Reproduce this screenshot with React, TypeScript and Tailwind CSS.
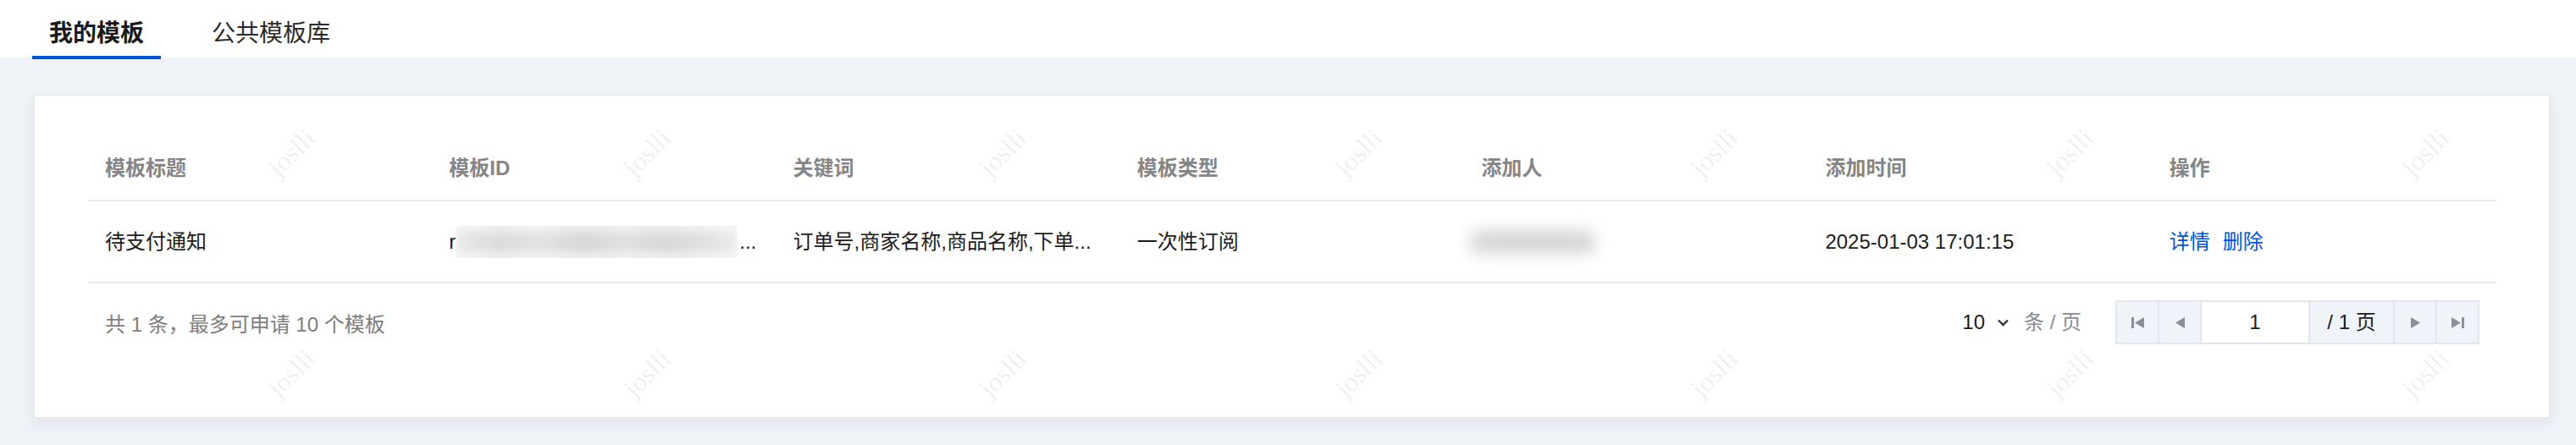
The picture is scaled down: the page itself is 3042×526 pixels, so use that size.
import React from "react";

const FONT = "font-['Liberation_Sans','Noto_Sans_CJK_SC',sans-serif]";

const headers = ["模板标题", "模板ID", "关键词", "模板类型", "添加人", "添加时间", "操作"];

// watermark grid, centres in px
const marks: { x: number; y: number }[] = [];
for (const y of [180, 441]) {
  for (let k = 0; k < 7; k++) marks.push({ x: 344 + 420 * k, y });
}

function Tri({ dir, bar }: { dir: "left" | "right"; bar?: boolean }) {
  const w = bar ? 15 : 11;
  return (
    <svg width={w} height="13" viewBox={`0 0 ${w} 13`} className="text-[#8a8f99]" aria-hidden>
      {dir === "left" ? (
        <>
          {bar && <rect x="0" y="0" width="3" height="13" fill="currentColor" />}
          <polygon points={`${w},0 ${w},13 ${bar ? 4 : 0},6.5`} fill="currentColor" />
        </>
      ) : (
        <>
          <polygon points="0,0 0,13 11,6.5" fill="currentColor" />
          {bar && <rect x="12" y="0" width="3" height="13" fill="currentColor" />}
        </>
      )}
    </svg>
  );
}

export default function App() {
  return (
    <div className={`relative min-h-[526px] w-full overflow-hidden bg-[#eff2f7] ${FONT}`}>
      {/* tabs */}
      <div className="flex h-[68px] gap-[40px] bg-white pl-[38px]">
        <div className="relative h-full px-5 pt-[21px] text-[28px] leading-[38px] font-semibold text-[#1a1a1a]">
          我的模板
          <span className="absolute bottom-[-2px] left-0 right-0 h-[4px] bg-[#0052d9]" />
        </div>
        <div className="relative h-full px-5 pt-[21px] text-[28px] leading-[38px] text-[#2b2b2b]">
          公共模板库
        </div>
      </div>

      {/* card */}
      <div className="mb-[31px] ml-[39px] mr-[30px] mt-[43px] border-2 border-[#e6e9ee] bg-white pl-[63px] pr-[62px] pb-[86px] pt-[49px] shadow-[0_6px_14px_rgba(40,50,70,0.07)]">
        <div className="grid h-[76px] grid-cols-7 items-center border-b-2 border-[#e7eaef]">
          {headers.map((h) => (
            <div key={h} className="px-5 text-[24px] font-semibold text-[#858585]">
              {h}
            </div>
          ))}
        </div>

        <div className="grid h-[97px] grid-cols-7 items-center border-b-2 border-[#e7eaef] text-[24px] text-[#1c1c1c]">
          <div className="px-5">待支付通知</div>
          <div className="flex items-center px-5">
            <span>r</span>
            <span className="block h-[38px] w-[333px] bg-[linear-gradient(90deg,#eaeaea_0%,#dcdcdc_15%,#e3e3e3_30%,#d8d8d8_45%,#e0e0e0_60%,#d9d9d9_75%,#e2e2e2_90%,#ececec_100%)] shadow-[inset_0_8px_8px_rgba(255,255,255,0.5),inset_0_-8px_8px_rgba(255,255,255,0.5)]" />
            <span className="ml-[2px]">...</span>
          </div>
          <div className="px-5 whitespace-nowrap">订单号,商家名称,商品名称,下单...</div>
          <div className="px-5">一次性订阅</div>
          <div className="px-5">
            <div className="-ml-[14px] h-[28px] w-[150px] rounded-full bg-[#d6d6d6] blur-[9px]" />
          </div>
          <div className="px-5 whitespace-nowrap">2025-01-03 17:01:15</div>
          <div className="flex gap-[15px] px-5 text-[#0052d9]">
            <span>详情</span>
            <span>删除</span>
          </div>
        </div>

        {/* footer */}
        <div className="flex items-center justify-between px-5 pt-[20px]">
          <div className="pt-[5px] text-[24px] text-[#7d7d7d]">共 1 条，最多可申请 10 个模板</div>
          <div className="flex items-center gap-[40px]">
            <div className="flex items-center text-[24px]">
              <span className="text-[#1c1c1c]">10</span>
              <svg width="15" height="9" viewBox="0 0 15 9" className="ml-[14px] text-[#333]" aria-hidden>
                <polyline points="2,1.5 7.5,7 13,1.5" fill="none" stroke="currentColor" strokeWidth="2.4" />
              </svg>
              <span className="ml-[17px] text-[#8c8c8c]">条 / 页</span>
            </div>
            <div className="flex h-[52px] border-2 border-[#e3e7ed] bg-[#f0f3f7]">
              <div className="flex w-[48px] items-center justify-center">
                <Tri dir="left" bar />
              </div>
              <div className="flex w-[50px] items-center justify-center border-l-2 border-[#e3e7ed]">
                <Tri dir="left" />
              </div>
              <div className="flex w-[128px] items-center justify-center border-l-2 border-[#e3e7ed] bg-white text-[24px] text-[#1c1c1c]">
                1
              </div>
              <div className="flex w-[100px] items-center justify-center border-l-2 border-[#e3e7ed] text-[24px] text-[#1c1c1c]">
                / 1 页
              </div>
              <div className="flex w-[50px] items-center justify-center border-l-2 border-[#e3e7ed]">
                <Tri dir="right" />
              </div>
              <div className="flex w-[50px] items-center justify-center border-l-2 border-[#e3e7ed]">
                <Tri dir="right" bar />
              </div>
            </div>
          </div>
        </div>
      </div>

      {/* watermark */}
      <div className="pointer-events-none absolute inset-0">
        {marks.map((m, i) => (
          <span
            key={i}
            className="absolute -translate-x-1/2 -translate-y-1/2 -rotate-45 font-['Liberation_Serif',serif] text-[32px] text-black/[0.07]"
            style={{ left: m.x, top: m.y }}
          >
            joslli
          </span>
        ))}
      </div>
    </div>
  );
}
